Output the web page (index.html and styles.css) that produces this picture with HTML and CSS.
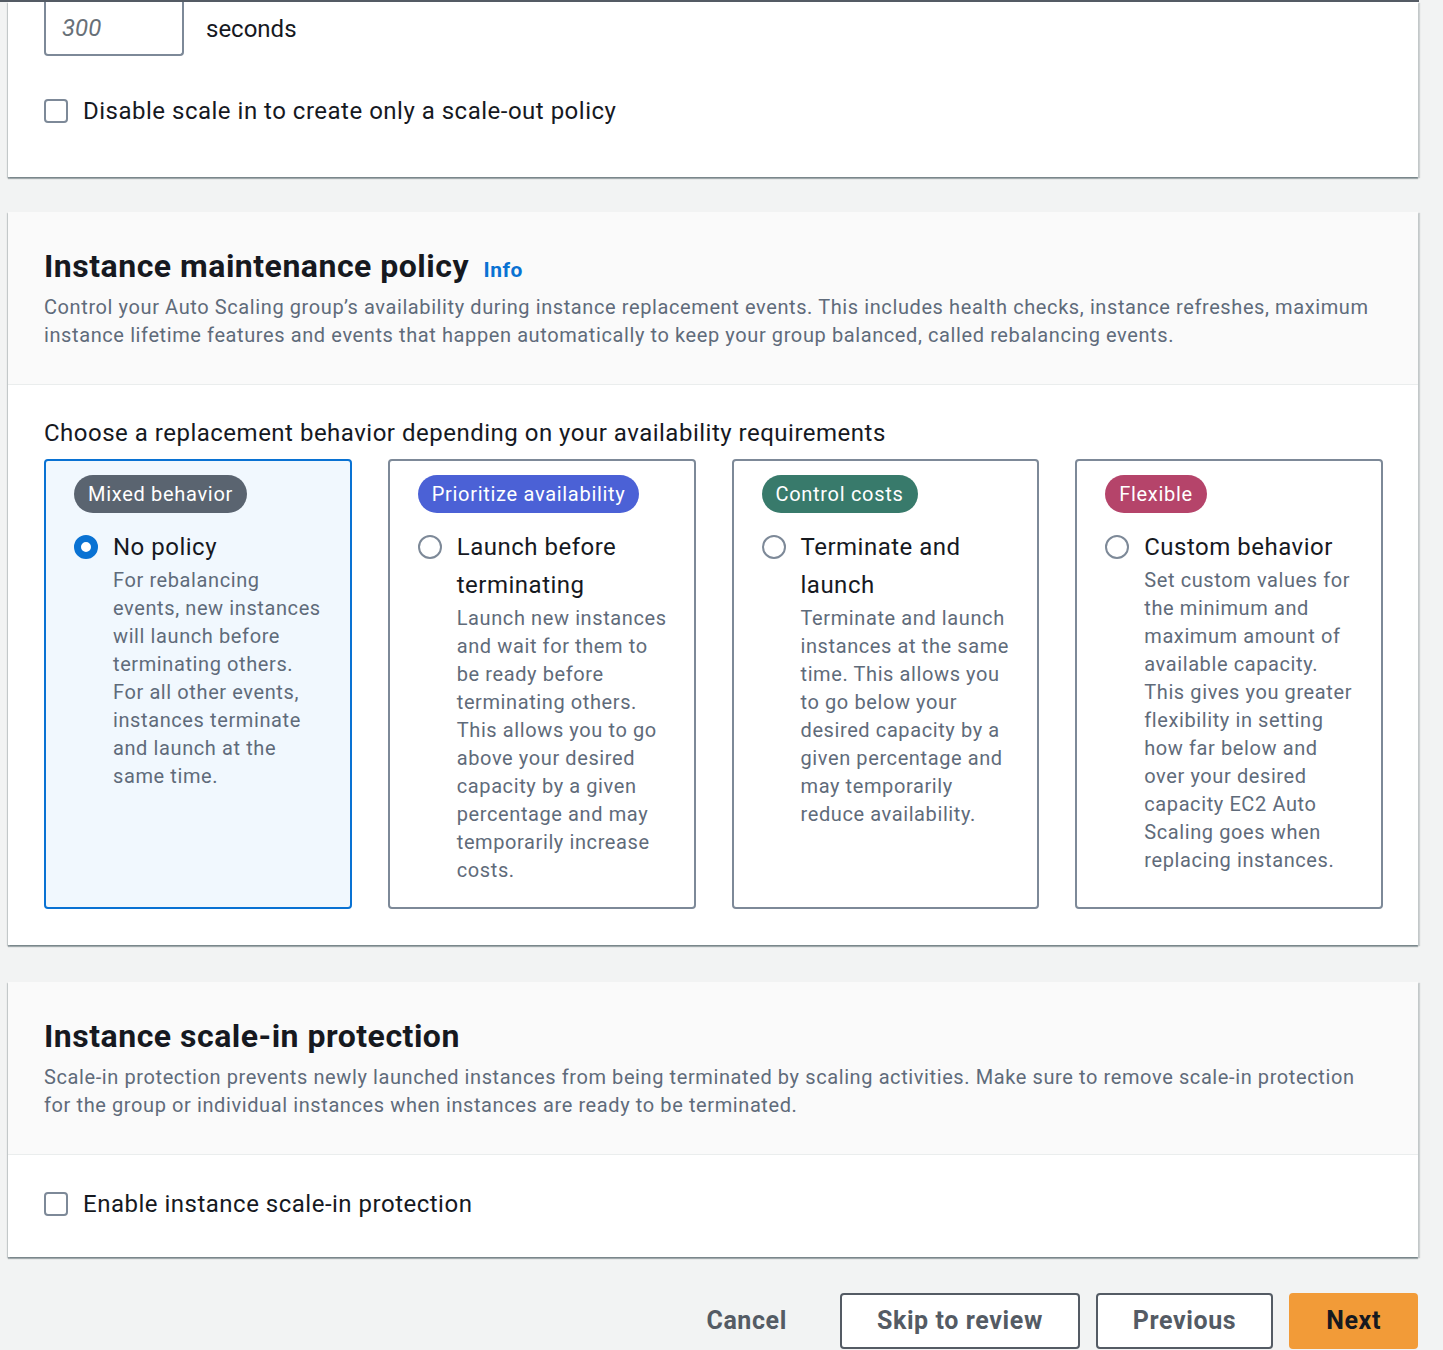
FILE: index.html
```html
<!DOCTYPE html>
<html lang="en">
<head>
    <meta charset="UTF-8">
    <meta name="viewport" content="width=device-width, initial-scale=1.0">
    <title>Configure group size and scaling</title>
    <link rel="stylesheet" href="styles.css">
</head>
<body>
    <div class="topbar"></div>

    <main class="page">
        <!-- Scaling policy (tail end) -->
        <section class="panel panel-first">
            <div class="panel-body panel-body-first">
                <div class="warmup-row">
                    <input class="num-input" type="text" placeholder="300">
                    <span class="unit">seconds</span>
                </div>
                <label class="check-row check-row-spaced">
                    <span class="checkbox"></span>
                    <span>Disable scale in to create only a scale-out policy</span>
                </label>
            </div>
        </section>

        <!-- Instance maintenance policy -->
        <section class="panel">
            <div class="panel-header">
                <h2>Instance maintenance policy <a href="#" class="info-link">Info</a></h2>
                <p class="panel-desc">Control your Auto Scaling group’s availability during instance replacement events. This includes health checks, instance refreshes, maximum instance lifetime features and events that happen automatically to keep your group balanced, called rebalancing events.</p>
            </div>
            <div class="panel-body">
                <p class="field-label">Choose a replacement behavior depending on your availability requirements</p>
                <div class="tiles">
                    <label class="tile tile-selected">
                        <span class="badge badge-grey">Mixed behavior</span>
                        <span class="tile-option">
                            <span class="radio radio-on"></span>
                            <span class="tile-text">
                                <span class="tile-title">No policy</span>
                                <span class="tile-desc">For rebalancing events, new instances will launch before terminating others. For all other events, instances terminate and launch at the same time.</span>
                            </span>
                        </span>
                    </label>
                    <label class="tile">
                        <span class="badge badge-blue">Prioritize availability</span>
                        <span class="tile-option">
                            <span class="radio"></span>
                            <span class="tile-text">
                                <span class="tile-title">Launch before terminating</span>
                                <span class="tile-desc">Launch new instances and wait for them to be ready before terminating others. This allows you to go above your desired capacity by a given percentage and may temporarily increase costs.</span>
                            </span>
                        </span>
                    </label>
                    <label class="tile">
                        <span class="badge badge-green">Control costs</span>
                        <span class="tile-option">
                            <span class="radio"></span>
                            <span class="tile-text">
                                <span class="tile-title">Terminate and launch</span>
                                <span class="tile-desc">Terminate and launch instances at the same time. This allows you to go below your desired capacity by a given percentage and may temporarily reduce availability.</span>
                            </span>
                        </span>
                    </label>
                    <label class="tile">
                        <span class="badge badge-red">Flexible</span>
                        <span class="tile-option">
                            <span class="radio"></span>
                            <span class="tile-text">
                                <span class="tile-title">Custom behavior</span>
                                <span class="tile-desc">Set custom values for the minimum and maximum amount of available capacity. This gives you greater flexibility in setting how far below and over your desired capacity EC2 Auto Scaling goes when replacing instances.</span>
                            </span>
                        </span>
                    </label>
                </div>
            </div>
        </section>

        <!-- Scale-in protection -->
        <section class="panel panel-last">
            <div class="panel-header">
                <h2>Instance scale-in protection</h2>
                <p class="panel-desc">Scale-in protection prevents newly launched instances from being terminated by scaling activities. Make sure to remove scale-in protection for the group or individual instances when instances are ready to be terminated.</p>
            </div>
            <div class="panel-body panel-body-short">
                <label class="check-row">
                    <span class="checkbox"></span>
                    <span>Enable instance scale-in protection</span>
                </label>
            </div>
        </section>

        <div class="actions">
            <button class="btn btn-link">Cancel</button>
            <button class="btn">Skip to review</button>
            <button class="btn">Previous</button>
            <button class="btn btn-primary">Next</button>
        </div>
    </main>
</body>
</html>
```

FILE: styles.css
```css
body {
    margin: 0;
    background-color: #f2f3f3;
    font-family: Roboto, "Liberation Sans", sans-serif;
    color: #16191f;
}

.topbar {
    width: 1419px;
    height: 2px;
    background-color: #545b64;
}

.page {
    width: 1410px;
    margin-left: 8px;
}

/* panels */
.panel {
    background-color: #fff;
    margin-bottom: 37px;
    box-shadow: 0 2px 1px 0 rgba(0, 28, 36, 0.3), 2px 1px 1px 0 rgba(0, 28, 36, 0.15), -1px 1px 1px 0 rgba(0, 28, 36, 0.15);
}

.panel-first {
    margin-bottom: 35px;
}

.panel-last {
    margin-bottom: 36px;
}

.panel-header {
    background-color: #fafafa;
    padding: 34px 36px 35px;
    border-bottom: 1px solid #eaeded;
}

.panel-header h2 {
    margin: 0;
    font-size: 32px;
    line-height: 40px;
    font-weight: 700;
    letter-spacing: 0.5px;
    color: #16191f;
}

.info-link {
    font-size: 21px;
    line-height: 1;
    font-weight: 700;
    letter-spacing: 0.5px;
    color: #0972d3;
    text-decoration: none;
    margin-left: 6px;
}

.panel-desc {
    margin: 7px 0 0;
    font-size: 20px;
    line-height: 28px;
    letter-spacing: 0.6px;
    color: #5f6b7a;
}

.panel-body {
    padding: 33px 35px 36px 36px;
}

.panel-body-first {
    padding-top: 0;
    padding-bottom: 51px;
}

.panel-body-short {
    padding-top: 34px;
    padding-bottom: 38px;
}

.field-label {
    margin: 0 0 11px;
    font-size: 24px;
    line-height: 30px;
    letter-spacing: 0.5px;
}

/* inputs */
.warmup-row {
    display: flex;
    align-items: center;
    gap: 22px;
}

.num-input {
    width: 140px;
    height: 54px;
    box-sizing: border-box;
    padding: 0 16px;
    border: 2px solid #7d8998;
    border-top: none;
    border-radius: 0 0 4px 4px;
    font-family: inherit;
    font-size: 24px;
    background: #fff;
}

.num-input::placeholder {
    color: #687078;
    font-style: italic;
}

.unit {
    font-size: 24px;
}

.check-row {
    display: flex;
    align-items: center;
    gap: 15px;
    font-size: 24px;
    line-height: 30px;
    letter-spacing: 0.5px;
}

.check-row-spaced {
    margin-top: 40px;
}

.checkbox {
    width: 24px;
    height: 24px;
    box-sizing: border-box;
    border: 2px solid #7d8998;
    border-radius: 4px;
    background: #fff;
    flex: none;
}

/* replacement behavior tiles */
.tiles {
    display: grid;
    grid-template-columns: repeat(4, 1fr);
    column-gap: 36px;
}

.tile {
    display: flex;
    flex-direction: column;
    align-items: flex-start;
    min-height: 450px;
    box-sizing: border-box;
    padding: 14px 24px 14px 28px;
    border: 2px solid #7d8998;
    border-radius: 4px;
    background: #fff;
}

.tile-selected {
    border-color: #0972d3;
    background-color: #f1f8fe;
}

.badge {
    display: inline-block;
    height: 38px;
    line-height: 38px;
    padding: 0 14px;
    border-radius: 19px;
    font-size: 20px;
    letter-spacing: 0.7px;
    color: #fff;
}

.badge-grey { background-color: #5a6470; }
.badge-blue { background-color: #4b61d6; }
.badge-green { background-color: #387a6b; }
.badge-red { background-color: #b5446a; }

.tile-option {
    display: flex;
    gap: 15px;
    margin-top: 15px;
}

.radio {
    width: 24px;
    height: 24px;
    box-sizing: border-box;
    margin-top: 7px;
    border: 2px solid #7d8998;
    border-radius: 50%;
    background: #fff;
    flex: none;
}

.radio-on {
    border: 7px solid #0972d3;
}

.tile-text {
    display: flex;
    flex-direction: column;
}

.tile-title {
    font-size: 24px;
    line-height: 38px;
    letter-spacing: 0.5px;
}

.tile-desc {
    font-size: 20px;
    line-height: 28px;
    letter-spacing: 0.6px;
    color: #5f6b7a;
}

/* footer buttons */
.actions {
    display: flex;
    justify-content: flex-end;
    gap: 16px;
}

.btn {
    font-family: inherit;
    font-size: 25px;
    line-height: 30px;
    font-weight: 700;
    letter-spacing: 0.6px;
    color: #545b64;
    background: #fff;
    border: 2px solid #545b64;
    border-radius: 4px;
    padding: 11px 35px;
    cursor: pointer;
}

.btn-link {
    background: none;
    border-color: transparent;
}

.btn-primary {
    background-color: #f29b38;
    border-color: #f29b38;
    color: #16191f;
}
```
